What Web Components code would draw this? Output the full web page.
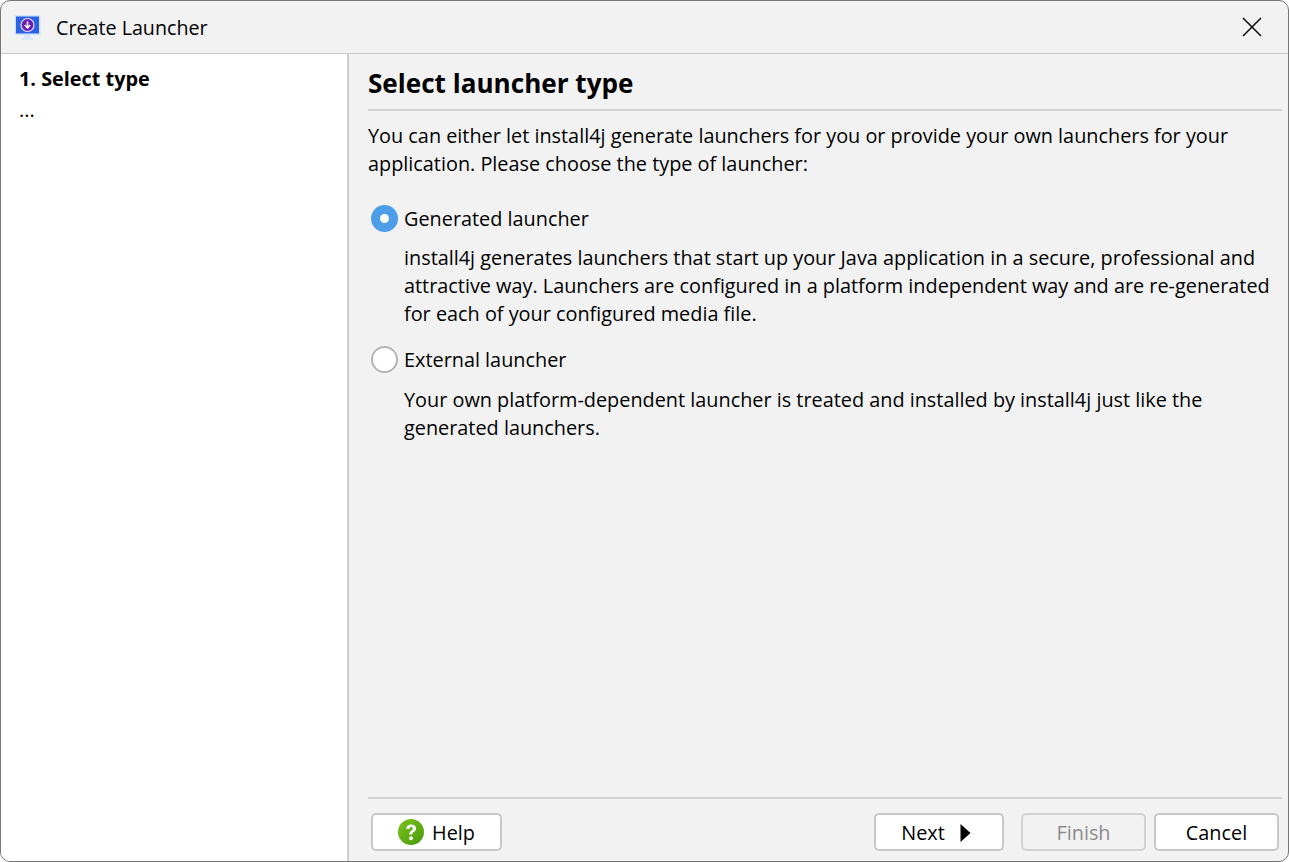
<!DOCTYPE html>
<html>
<head>
<meta charset="utf-8">
<title>Create Launcher</title>
<style>
  html, body { margin: 0; height: 100%; background: #fff; }
  body { font: 19.85px/28px "Open Sans", "Noto Sans", sans-serif; color: #000; overflow: hidden; }
</style>
</head>
<body>
<wizard-window>
  <title-bar slot="title" label="Create Launcher"></title-bar>
  <step-list slot="steps">
    <b>1. Select type</b>
    <span>...</span>
  </step-list>
  <wizard-page slot="page" heading="Select launcher type">
    <p class="intro">You can either let install4j generate launchers for you or provide your own launchers for your application. Please choose the type of launcher:</p>
    <radio-option label="Generated launcher" checked>install4j generates launchers that start up your Java application in a secure, professional and attractive way. Launchers are configured in a platform independent way and are re-generated for each of your configured media file.</radio-option>
    <radio-option label="External launcher" style="--body-gap: 12px">Your own platform-dependent launcher is treated and installed by install4j just like the generated launchers.</radio-option>
  </wizard-page>
  <button-bar slot="buttons">
    <wiz-button slot="left" width="131">
      <svg slot="before" width="26" height="26" viewBox="0 0 28 28">
        <defs><linearGradient id="g" x1="0" y1="0" x2="1" y2="1"><stop offset="0" stop-color="#7cc21e"/><stop offset="1" stop-color="#469c0c"/></linearGradient></defs>
        <circle cx="14" cy="14" r="14" fill="url(#g)"/>
        <path d="M8.8 10.8c0-3 2.3-5 5.4-5s5.2 1.7 5.2 4.3c0 2-1.1 3-2.5 3.9-1.2.8-1.5 1.3-1.5 2.6h-3.2c0-2.3.7-3.3 2.2-4.3 1-.7 1.6-1.2 1.6-2.1 0-1-.7-1.6-1.8-1.6-1.2 0-1.9.8-2 2.2z" fill="#fff"/>
        <circle cx="14" cy="20.8" r="2.1" fill="#fff"/>
      </svg>
      Help
    </wiz-button>
    <wiz-button slot="right" width="130" spaced>
      Next
      <svg slot="after" width="11" height="18" viewBox="0 0 11 18"><path d="M.5 0 10.5 9 .5 18z" fill="#000"/></svg>
    </wiz-button>
    <wiz-button slot="right" width="125" disabled>Finish</wiz-button>
    <wiz-button slot="right" width="125">Cancel</wiz-button>
  </button-bar>
</wizard-window>

<script>
class WizardWindow extends HTMLElement {
  constructor() {
    super();
    this.attachShadow({ mode: "open" });
    this.shadowRoot.innerHTML = `
      <style>
        :host {
          display: grid;
          box-sizing: border-box;
          width: 1289px;
          height: 862px;
          grid-template-columns: 348px 1fr;
          grid-template-rows: 53px 1fr auto;
          background: #f2f2f2;
          border: 1px solid #767676;
          border-radius: 10px;
          overflow: hidden;
        }
        .title { grid-column: 1 / 3; border-bottom: 1px solid #c9c9c9; }
        .steps { grid-row: 2 / 4; background: #fff; border-right: 2px solid #cdcdcd; }
        .page { min-height: 0; }
      </style>
      <div class="title"><slot name="title"></slot></div>
      <div class="steps"><slot name="steps"></slot></div>
      <div class="page"><slot name="page"></slot></div>
      <div class="buttons"><slot name="buttons"></slot></div>`;
  }
}

class TitleBar extends HTMLElement {
  constructor() {
    super();
    this.attachShadow({ mode: "open" });
    this.shadowRoot.innerHTML = `
      <style>
        :host {
          display: flex;
          align-items: center;
          height: 52px;
          padding: 0 26px 0 13px;
          font-size: 19.7px;
        }
        .icon { margin-right: 15px; }
        .label { flex: 1; position: relative; top: 1px; }
        .close { display: block; }
      </style>
      <svg class="icon" width="27" height="27" viewBox="0 0 27 27">
        <rect x="0.5" y="1" width="26" height="20" rx="1" fill="#cfe2f8"/>
        <rect x="2" y="2.5" width="23" height="17" fill="#2c63e4"/>
        <rect x="10" y="21" width="7" height="3" fill="#d8e8f8"/>
        <rect x="7" y="24" width="13" height="2" rx="1" fill="#d8e8f8"/>
        <circle cx="13.5" cy="11" r="6.5" fill="#6a1fb8" stroke="#e6dcf6" stroke-width="1.2"/>
        <path d="M13.5 7.5v6M10.8 11.1l2.7 2.9 2.7-2.9" fill="none" stroke="#fff" stroke-width="1.5"/>
      </svg>
      <span class="label"></span>
      <svg class="close" width="20" height="20" viewBox="0 0 20 20">
        <path d="M1 1 19 19M19 1 1 19" stroke="#111" stroke-width="1.6" fill="none"/>
      </svg>`;
    this.shadowRoot.querySelector(".label").textContent = this.getAttribute("label");
  }
}

class StepList extends HTMLElement {
  constructor() {
    super();
    this.attachShadow({ mode: "open" });
    this.shadowRoot.innerHTML = `
      <style>
        :host {
          display: flex;
          flex-direction: column;
          gap: 3px;
          padding: 11px 0 0 18px;
        }
        ::slotted(*) { display: block; }
      </style>
      <slot></slot>`;
  }
}

class WizardPage extends HTMLElement {
  constructor() {
    super();
    this.attachShadow({ mode: "open" });
    this.shadowRoot.innerHTML = `
      <style>
        :host { display: block; padding: 11px 6px 0 19px; }
        h1 {
          margin: 0;
          height: 44px;
          font-size: 26.1px;
          line-height: 36px;
          font-weight: 700;
          border-bottom: 2px solid #d2d2d2;
        }
        ::slotted(p) { margin: 11px 0 27px; }
      </style>
      <h1></h1>
      <slot></slot>`;
    this.shadowRoot.querySelector("h1").textContent = this.getAttribute("heading");
  }
}

class RadioOption extends HTMLElement {
  constructor() {
    super();
    this.attachShadow({ mode: "open" });
    this.shadowRoot.innerHTML = `
      <style>
        :host {
          display: grid;
          grid-template-columns: 27px 1fr;
          column-gap: 6px;
          margin: 0 0 18px 3px;
        }
        .dot {
          box-sizing: border-box;
          width: 27px;
          height: 27px;
          border-radius: 50%;
          background: #fff;
          border: 2px solid #b4b4b4;
          display: grid;
          place-items: center;
        }
        :host([checked]) .dot { background: #4d9ee8; border: 0; }
        :host([checked]) .dot::after {
          content: "";
          width: 9px;
          height: 9px;
          border-radius: 50%;
          background: #fff;
        }
        .label { align-self: center; }
        .body { grid-column: 2; margin-top: var(--body-gap, 11px); }
      </style>
      <div class="dot"></div>
      <div class="label"></div>
      <div class="body"><slot></slot></div>`;
    this.shadowRoot.querySelector(".label").textContent = this.getAttribute("label");
  }
}

class ButtonBar extends HTMLElement {
  constructor() {
    super();
    this.attachShadow({ mode: "open" });
    this.shadowRoot.innerHTML = `
      <style>
        :host {
          display: flex;
          justify-content: space-between;
          margin: 0 6px 0 19px;
          padding: 14px 3px 10px 3px;
          border-top: 2px solid #d2d2d2;
        }
        div { display: flex; gap: 8px; }
        ::slotted([spaced]) { margin-right: 9px; }
      </style>
      <div><slot name="left"></slot></div>
      <div><slot name="right"></slot></div>`;
  }
}

class WizButton extends HTMLElement {
  constructor() {
    super();
    this.attachShadow({ mode: "open" });
    this.shadowRoot.innerHTML = `
      <style>
        :host {
          display: flex;
          align-items: center;
          justify-content: center;
          gap: 8px;
          box-sizing: border-box;
          height: 38px;
          background: #fff;
          border: 2px solid #c8c8c8;
          border-radius: 5px;
        }
        :host([disabled]) { background: #f2f2f2; color: #8c8c8c; border-color: #d2d2d2; }
        span { margin-top: 2px; }
        slot[name="after"]::slotted(svg) { margin: 2px 6px 0 7px; }
      </style>
      <slot name="before"></slot><span><slot></slot></span><slot name="after"></slot>`;
    this.style.width = this.getAttribute("width") + "px";
  }
}

customElements.define("wizard-window", WizardWindow);
customElements.define("title-bar", TitleBar);
customElements.define("step-list", StepList);
customElements.define("wizard-page", WizardPage);
customElements.define("radio-option", RadioOption);
customElements.define("button-bar", ButtonBar);
customElements.define("wiz-button", WizButton);
</script>
</body>
</html>
